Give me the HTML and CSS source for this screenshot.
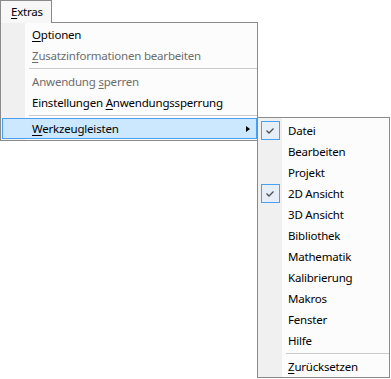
FILE: index.html
```html
<!DOCTYPE html>
<html>
<head>
<meta charset="utf-8">
<link rel="stylesheet" href="styles.css">
</head>
<body>
<div class="tab"><u>E</u>xtras</div>
<div class="menu main">
  <div class="item"><u>O</u>ptionen</div>
  <div class="item disabled"><u>Z</u>usatzinformationen bearbeiten</div>
  <div class="sep"></div>
  <div class="item disabled">Anwendung <u>s</u>perren</div>
  <div class="item">Einstellungen <u>A</u>nwendungssperrung</div>
  <div class="sep"></div>
  <div class="item hot"><span class="label"><u>W</u>erkzeugleisten</span><span class="arrow"></span></div>
</div>
<div class="menu sub">
  <div class="item"><span class="check"><svg width="17" height="17" viewBox="0 0 17 17"><polyline points="4.5,8.5 7,11 11.5,6.5" fill="none" stroke="#505050" stroke-width="1.3"/></svg></span>Datei</div>
  <div class="item">Bearbeiten</div>
  <div class="item">Projekt</div>
  <div class="item"><span class="check"><svg width="17" height="17" viewBox="0 0 17 17"><polyline points="4.5,8.5 7,11 11.5,6.5" fill="none" stroke="#505050" stroke-width="1.3"/></svg></span>2D Ansicht</div>
  <div class="item">3D Ansicht</div>
  <div class="item">Bibliothek</div>
  <div class="item">Mathematik</div>
  <div class="item">Kalibrierung</div>
  <div class="item">Makros</div>
  <div class="item">Fenster</div>
  <div class="item">Hilfe</div>
  <div class="sep"></div>
  <div class="item"><u>Z</u>urücksetzen</div>
</div>
</body>
</html>
```
FILE: styles.css
```css
html, body {
  margin: 0;
  padding: 0;
  background: #ffffff;
}
body {
  font-family: "Noto Sans", "Open Sans", sans-serif;
  font-size: 11.5px;
  letter-spacing: -0.2px;
  color: #000;
  position: relative;
  width: 391px;
  height: 379px;
  overflow: hidden;
}
u {
  text-decoration: underline;
  text-underline-offset: 2px;
  text-decoration-thickness: 1px;
}
.tab {
  position: relative;
  z-index: 2;
  box-sizing: border-box;
  width: 52px;
  height: 23px;
  border: 1px solid #8a8a8a;
  border-bottom: none;
  background: #f7f7f7;
  padding-left: 10px;
  line-height: 22px;
}
.menu {
  box-sizing: border-box;
  border: 1px solid #8a8a8a;
  background: linear-gradient(to right, #f0f0f0 24px, #fcfcfc 24px);
}
.main {
  position: relative;
  z-index: 1;
  width: 258px;
  margin-top: -1px;
  padding: 1px 0 1px 0;
}
.item {
  box-sizing: border-box;
  height: 21px;
  line-height: 19px;
  border: 1px solid transparent;
  white-space: nowrap;
}
.main .item {
  margin-left: 1px;
  padding-left: 29px;
}
.disabled {
  color: #6d6d6d;
}
.hot {
  display: flex;
  align-items: center;
  background: #cce8ff;
  border-color: #48a0ef;
}
.label {
  flex: 1;
}
.arrow {
  width: 0;
  height: 0;
  border-left: 4px solid #000;
  border-top: 3.5px solid transparent;
  border-bottom: 3.5px solid transparent;
  margin-right: 6px;
}
.sep {
  height: 1px;
  background: #cbcbcb;
  margin: 2px 0 2px 28px;
}
.sub {
  position: absolute;
  z-index: 3;
  left: 257px;
  top: 117px;
  width: 133px;
  height: 261px;
  padding-top: 2px;
}
.sub .item {
  position: relative;
  border: none;
  padding-left: 30px;
  line-height: 21px;
}
.check {
  position: absolute;
  left: 3px;
  top: 1px;
  width: 17px;
  height: 17px;
  border: 1px solid #48a0ef;
  background: #e6eef7;
  display: flex;
}
.sub .sep {
  margin-left: 28px;
}
```
